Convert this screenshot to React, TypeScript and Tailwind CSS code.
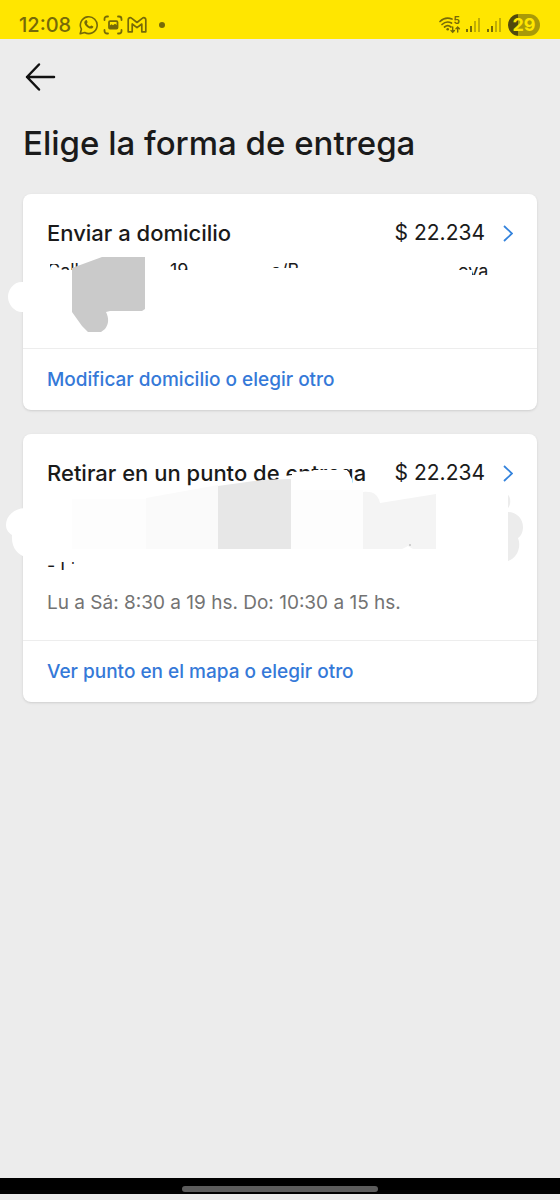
import React from 'react';

const StatusBar: React.FC = () => {
  return (
    <header className="flex h-[39px] items-center justify-between bg-[#ffe600] pt-[11px] pl-[19px] pr-5 text-[#766a08]">
      <div className="flex items-center">
        <span className="w-[60px] text-xl leading-6 font-medium">12:08</span>
        {/* WhatsApp */}
        <svg className="h-5 w-5" viewBox="0 0 20 20" fill="none" stroke="currentColor" strokeWidth="1.6">
          <path d="M1.2 18.8l1.2-4.6A8.4 8.4 0 1 1 5.7 17.5z" strokeLinejoin="round" />
          <path
            d="M6.7 5.3c.5-.4 1-.3 1.2.2l.7 1.6c.1.4-.6 1-.7 1.3.5 1.3 1.7 2.4 3.1 3 .4 0 .9-1 1.3-.9l1.7.8c.5.3.3 1-.1 1.5-.8.9-2.1 1-3.3.6-2.7-1-4.5-2.8-5.2-5.1-.3-1.2.3-2.3 1.3-3z"
            fill="currentColor"
            stroke="none"
          />
        </svg>
        {/* Screenshot */}
        <svg className="ml-1 h-5 w-5" viewBox="0 0 20 20" fill="none" stroke="currentColor" strokeWidth="1.8" strokeLinecap="round">
          <path d="M1.5 5V4A2.5 2.5 0 0 1 4 1.5h1M15 1.5h1A2.5 2.5 0 0 1 18.5 4v1M18.5 15v1a2.5 2.5 0 0 1-2.5 2.5h-1M5 18.5H4A2.5 2.5 0 0 1 1.5 16v-1" />
          <rect x="6" y="6.2" width="8.5" height="7.3" rx="1" strokeWidth="1.8" />
          <path d="M6.5 13v-2.2l2-1.5 1.5 1 2-1.5 2 1.5V13z" fill="currentColor" stroke="none" />
        </svg>
        {/* Gmail */}
        <svg className="ml-1 h-5 w-5" viewBox="0 0 20 20" fill="none" stroke="currentColor" strokeWidth="1.7" strokeLinejoin="round">
          <path d="M1.2 16.8V4.8c0-1.9 2-2.7 3.3-1.6L10 7.5l5.5-4.3c1.3-1.1 3.3-.3 3.3 1.6v12h-4V9L10 12.700 5.200 9v7.800z" />
        </svg>
        <span className="ml-3 h-[6px] w-[6px] rounded-full bg-[#766a08]" />
      </div>

      <div className="flex items-center">
        {/* Wi-Fi */}
        <svg className="mr-1 h-5 w-6" viewBox="0 0 24 20" fill="none" stroke="currentColor" strokeWidth="1.7" strokeLinecap="round">
          <path d="M2 6.5C5.5 3 10 2.5 14 4M4 9.5c3-2.8 6.5-3 9.5-1.5M6.5 12c2-1.7 4.5-1.7 6.500 0" />
          <circle cx="9.7" cy="14.3" r="1.3" fill="currentColor" stroke="none" />
          <path d="M14.7 12v5M13 15.5l1.7 1.7 1.7-1.7M19.7 17v-5M18 13.7l1.7-1.7 1.7 1.7" strokeWidth="1.4" />
          <text x="15.5" y="9" fontSize="10" fontWeight="700" fill="currentColor" stroke="none">5</text>
        </svg>
        <Signal />
        <Signal />
        <span className="flex h-[22px] w-8 items-center justify-center rounded-full bg-[linear-gradient(90deg,#51490c_30%,#a89a08_30%)] text-lg leading-none font-bold text-[#ffe600]">
          29
        </span>
      </div>
    </header>
  );
};

const Signal: React.FC = () => {
  return (
    <svg className="mr-[6px] h-4 w-[15px]" viewBox="0 0 15 16" fill="currentColor">
      <rect x="0" y="12" width="2" height="3" />
      <rect x="4" y="9" width="2" height="6" />
      <rect x="8" y="4" width="2" height="11" opacity=".45" />
      <rect x="12" y="1" width="2" height="14" opacity=".45" />
    </svg>
  );
};

type OptionRowProps = {
  title: string;
  price: string;
};

const OptionRow: React.FC<OptionRowProps> = ({ title, price }) => {
  return (
    <button type="button" className="flex w-full items-center text-left text-[#1a1a1a]">
      <span className="flex-1 text-[22px] leading-7 font-medium whitespace-nowrap">{title}</span>
      <span className="text-[21px] leading-7 whitespace-nowrap">$ {price}</span>
      <svg className="ml-4 h-5 w-3" viewBox="0 0 12 20" fill="none" stroke="#3483dc" strokeWidth="1.8">
        <path d="M3 3l8 7.5L3 18" />
      </svg>
    </button>
  );
};

const CardLink: React.FC<{ children: React.ReactNode }> = ({ children }) => {
  return (
    <a href="#" className="flex h-[62px] items-center border-t border-[#ededed] px-6 pt-px text-[19px] font-medium text-[#3579d8]">
      {children}
    </a>
  );
};

function App() {
  return (
    <div className="flex min-h-screen flex-col bg-[#ececec] font-['Inter','Liberation_Sans',sans-serif]">
      <StatusBar />

      <main className="flex-1 px-[23px]">
        <button type="button" aria-label="Volver" className="mt-5 block h-9 w-9">
          <svg className="h-9 w-9" viewBox="0 0 36 36" fill="none" stroke="#111" strokeWidth="2.5" strokeLinecap="round" strokeLinejoin="round">
            <path d="M31 18H4M16 5.5L4 18l12 12.500" />
          </svg>
        </button>
        <h1 className="mt-7 text-[33px] leading-10 font-medium whitespace-nowrap text-[#1a1a1a]">Elige la forma de entrega</h1>

        <section className="relative mt-[31px] rounded-lg bg-white shadow-sm">
          <div className="h-[154px] px-6 pt-[25px]">
            <OptionRow title="Enviar a domicilio" price="22.234" />
            <p className="mt-[10px] flex text-lg leading-7 text-[#1a1a1a]">
              <span className="w-[123px]">Calle</span>
              <span className="w-[101px]">19</span>
              <span className="w-[187px]">a/B</span>
              <span>eva</span>
            </p>
          </div>
          <CardLink>Modificar domicilio o elegir otro</CardLink>

          {/* Hidden address */}
          <svg className="pointer-events-none absolute top-0 -left-[23px] h-[216px] w-[560px]" viewBox="0 194 560 216" aria-hidden="true">
            <path
              d="M26 282H22C13 282 8 290 8 297s6 15 14 15h4v32h488V275h-42v-5h-14l-158-2H240v2H30z"
              fill="#fff"
            />
            <path d="M46 260h16v4H50v6h-4z" fill="#fff" />
            <path d="M72 268L102 257h43v52l-3 2h-32l-4 1c3 6 3 12-1 17l-4 3H88l-6-6-10-14z" fill="#cacaca" />
          </svg>
        </section>

        <section className="relative mt-6 rounded-lg bg-white shadow-sm">
          <div className="h-[206px] px-6 pt-[25px]">
            <OptionRow title="Retirar en un punto de entrega" price="22.234" />
            <p className="mt-[66px] text-lg leading-7 text-[#1a1a1a]">- I '</p>
            <p className="mt-2 text-[19px] leading-7 text-[#737373]">Lu a Sá: 8:30 a 19 hs. Do: 10:30 a 15 hs.</p>
          </div>
          <CardLink>Ver punto en el mapa o elegir otro</CardLink>

          {/* Hidden pick-up point */}
          <svg className="pointer-events-none absolute top-0 -left-[23px] h-[268px] w-[560px]" viewBox="0 434 560 268" aria-hidden="true">
            <path
              d="M26 508c-12 0-20 8-20 17 0 5 3 8 6 10-1 13 6 20 14 22h30l3 5h30V549H500V490H352V479l-5-9-33 0-2 1-20 1v3l-7 1-2 3-22 2-44 6-72 12H26z"
              fill="#fff"
            />
            <path d="M44 570h32v6H44zM66 567h10v5H66zM88 590h22v5H88z" fill="#fff" />
            <path d="M146 498l72-13v64h-72z" fill="#fafafa" />
            <path d="M218 486l44-6 29-1v70h-73z" fill="#e7e7e7" />
            <path d="M72 499h74v50H72zM291 490h72v59h-72z" fill="#fdfdfd" />
            <path d="M363 492c8-1 15 1 17 11l56-9v55h-23l-5-3-6 3h-39z" fill="#f4f4f4" />
            <path d="M508 495c3 2 3 10 0 13zM508 512c9 0 15 7 15 15 0 5-2 9-5 11 4 10-2 21-10 23z" fill="#ececec" />
            <circle cx="410" cy="545" r="1" fill="#c5c5c5" />
          </svg>
        </section>
      </main>

      <footer className="border-b-[6px] border-[#ececec]">
        <div className="flex h-4 items-end justify-center bg-black pb-[2px]">
          <span className="h-[6px] w-[35%] rounded-full bg-[#5c5c5c]" />
        </div>
      </footer>
    </div>
  );
}

export default App;
